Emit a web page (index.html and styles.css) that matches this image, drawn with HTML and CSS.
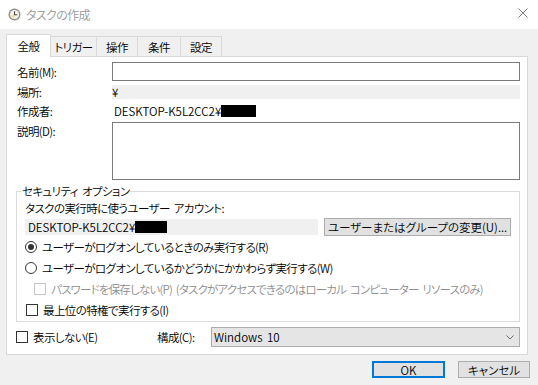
FILE: index.html
```html
<!DOCTYPE html>
<html lang="ja">
  <head>
    <meta charset="UTF-8" />
    <title>タスクの作成</title>
    <link rel="stylesheet" href="styles.css">
  </head>
  <body>
    <!-- タイトルバー -->
    <div class="titlebar">
      <svg class="app-icon" viewBox="0 0 13 13">
        <circle cx="6.5" cy="6.5" r="6" fill="#8f8f8f" />
        <circle cx="6.5" cy="6.5" r="4.6" fill="#f6f4ea" />
        <path d="M2.2 7.2 A4.4 4.4 0 0 0 6.5 10.9 L6.5 6.5 Z" fill="#efe3b0" />
        <path d="M6.5 3.2 V6.7 H9.3" fill="none" stroke="#4a4a4a" stroke-width="1.1" />
      </svg>
      <span class="title">タスクの作成</span>
      <svg class="close" viewBox="0 0 10 10">
        <path d="M0.5 0.5 L9.5 9.5 M9.5 0.5 L0.5 9.5" stroke="#7a7a7a" stroke-width="1" />
      </svg>
    </div>

    <!-- タブ -->
    <div class="tabs">
      <div class="tab active tab-general">全般</div>
      <div class="tab tab-trigger">トリガー</div>
      <div class="tab tab-action">操作</div>
      <div class="tab tab-cond">条件</div>
      <div class="tab tab-setting">設定</div>
    </div>

    <div class="panel">
      <div class="form">
        <label class="form-label">名前(M):</label>
        <div class="textbox"></div>

        <label class="form-label">場所:</label>
        <div class="readonly latin">¥</div>

        <label class="form-label">作成者:</label>
        <div class="value latin">DESKTOP-K5L2CC2¥<span class="redact redact-author"></span></div>

        <label class="form-label label-top">説明(D):</label>
        <div class="textbox tall"></div>
      </div>

      <!-- セキュリティ オプション -->
      <fieldset class="group">
        <legend>セキュリティ オプション</legend>
        <div class="line">タスクの実行時に使うユーザー アカウント:</div>
        <div class="account-row">
          <div class="account latin">DESKTOP-K5L2CC2¥<span class="redact redact-account"></span></div>
          <button class="btn btn-change">ユーザーまたはグループの変更(U)...</button>
        </div>
        <div class="option"><span class="radio checked"></span>ユーザーがログオンしているときのみ実行する(R)</div>
        <div class="option"><span class="radio"></span>ユーザーがログオンしているかどうかにかかわらず実行する(W)</div>
        <div class="option option-disabled"><span class="check"></span>パスワードを保存しない(P) (タスクがアクセスできるのはローカル コンピューター リソースのみ)</div>
        <div class="option option-top"><span class="check"></span>最上位の特権で実行する(I)</div>
      </fieldset>

      <div class="bottom-row">
        <div class="option hidden-opt"><span class="check"></span>表示しない(E)</div>
        <span class="config-label">構成(C):</span>
        <div class="combo">
          <span class="latin">Windows 10</span>
          <svg class="chevron" viewBox="0 0 8 5">
            <path d="M0.5 0.5 L4 4 L7.5 0.5" fill="none" stroke="#6b6b6b" stroke-width="1" />
          </svg>
        </div>
      </div>
    </div>

    <div class="actions">
      <button class="btn btn-ok latin">OK</button>
      <button class="btn btn-cancel">キャンセル</button>
    </div>
  </body>
</html>
```

FILE: styles.css
```css
* {
  box-sizing: border-box;
}

body {
  margin: 0;
  width: 538px;
  height: 385px;
  overflow: hidden;
  background: #f0f0f0;
  font-family: "Noto Sans CJK JP", "Liberation Sans", sans-serif;
  font-size: 11.5px;
  font-weight: 350;
  line-height: 16px;
  letter-spacing: -0.6px;
  word-spacing: 2px;
  color: #000;
  font-feature-settings: "palt";
}

/* 英数字は詰めない */
.latin {
  letter-spacing: 0;
}

/* タイトルバー */
.titlebar {
  height: 29px;
  background: #fff;
  display: flex;
  align-items: center;
  padding: 0 10px 0 8px;
}

.app-icon {
  width: 13px;
  height: 13px;
}

.title {
  margin-left: 5px;
  color: #999;
  font-size: 12px;
}

.close {
  margin-left: auto;
  width: 10px;
  height: 10px;
  align-self: flex-start;
  margin-top: 8px;
}

/* タブ */
.tabs {
  display: flex;
  align-items: flex-end;
  height: 22px;
  margin: 5px 0 0 6px;
}

.tab {
  height: 20px;
  border: 1px solid #d9d9d9;
  border-bottom: none;
  margin-left: -1px;
  background: #f0f0f0;
  display: flex;
  align-items: center;
  justify-content: center;
}

.tab.active {
  height: 23px;
  margin-left: 0;
  margin-bottom: -1px;
  background: #fff;
  position: relative;
  z-index: 1;
}

.tab-general { width: 45px; }
.tab-trigger { width: 47px; }
.tab-action { width: 42px; }
.tab-cond { width: 44px; }
.tab-setting { width: 42px; }

/* パネル */
.panel {
  margin: 0 10px 0 6px;
  border: 1px solid #d9d9d9;
  background: #fff;
  padding: 5px 7px 7px 9px;
}

.form {
  display: grid;
  grid-template-columns: 95px 1fr;
  grid-template-rows: 19px 14px 15px 58px;
  row-gap: 4px;
  margin-left: 1px;
  align-items: center;
}

.form-label.label-top {
  align-self: start;
  padding-top: 1px;
}

.textbox {
  height: 19px;
  border: 1px solid #7a7a7a;
  background: #fff;
}

.textbox.tall {
  height: 58px;
}

.readonly {
  height: 14px;
  line-height: 14px;
  background: #f0f0f0;
}

.value {
  height: 15px;
  display: flex;
  align-items: center;
  padding-left: 2px;
}

.redact {
  display: inline-block;
  height: 12px;
  background: #000;
}

.redact-author { width: 35px; }
.redact-account { width: 32px; }

/* グループ */
.group {
  margin: 4px 0 0 0;
  border: 1px solid #dcdcdc;
  padding: 0 0 1px 8px;
  min-width: 0;
}

.group legend {
  padding: 0 1px;
  margin-left: -4px;
  line-height: 14px;
}

.line {
  margin-top: 2px;
}

.account-row {
  display: flex;
  align-items: center;
  height: 18px;
  margin-top: 2px;
}

.account {
  width: 293px;
  height: 16px;
  background: #f0f0f0;
  display: flex;
  align-items: center;
  padding-left: 3px;
}

.btn {
  height: 17px;
  padding: 0;
  border: 1px solid #adadad;
  background: #e1e1e1;
  font: inherit;
  line-height: 14px;
  color: #000;
  white-space: nowrap;
}

.btn-change {
  width: 187px;
  height: 18px;
  margin-left: 6px;
}

/* ラジオ / チェック */
.option {
  display: flex;
  align-items: center;
  height: 21px;
  white-space: nowrap;
}

.radio,
.check {
  width: 12px;
  height: 12px;
  border: 1px solid #333;
  background: #fff;
  margin-right: 5px;
  flex: none;
}

.radio {
  border-radius: 50%;
  display: flex;
  align-items: center;
  justify-content: center;
}

.radio.checked::after {
  content: "";
  width: 6px;
  height: 6px;
  border-radius: 50%;
  background: #333;
}

.option-disabled {
  margin-left: 9px;
  color: #8d8d8d;
  letter-spacing: -0.8px;
}

.option-disabled .check {
  border-color: #c6c6c6;
}

.option-top {
  margin-left: 1px;
}

/* 下段 */
.bottom-row {
  display: flex;
  align-items: center;
  height: 20px;
  margin-top: 5px;
}

.hidden-opt {
  width: 141px;
}

.config-label {
  width: 54px;
}

.combo {
  flex: 1;
  height: 20px;
  background: #e5e5e5;
  border: 1px solid #adadad;
  display: flex;
  align-items: center;
  padding: 0 5px 0 2px;
}

.chevron {
  margin-left: auto;
  width: 8px;
  height: 5px;
}

/* ボタン */
.actions {
  display: flex;
  justify-content: flex-end;
  gap: 13px;
  margin-top: 6px;
  padding-right: 8px;
}

.btn-ok {
  width: 73px;
  border: 2px solid #0078d7;
}

.btn-cancel {
  width: 72px;
}
```
